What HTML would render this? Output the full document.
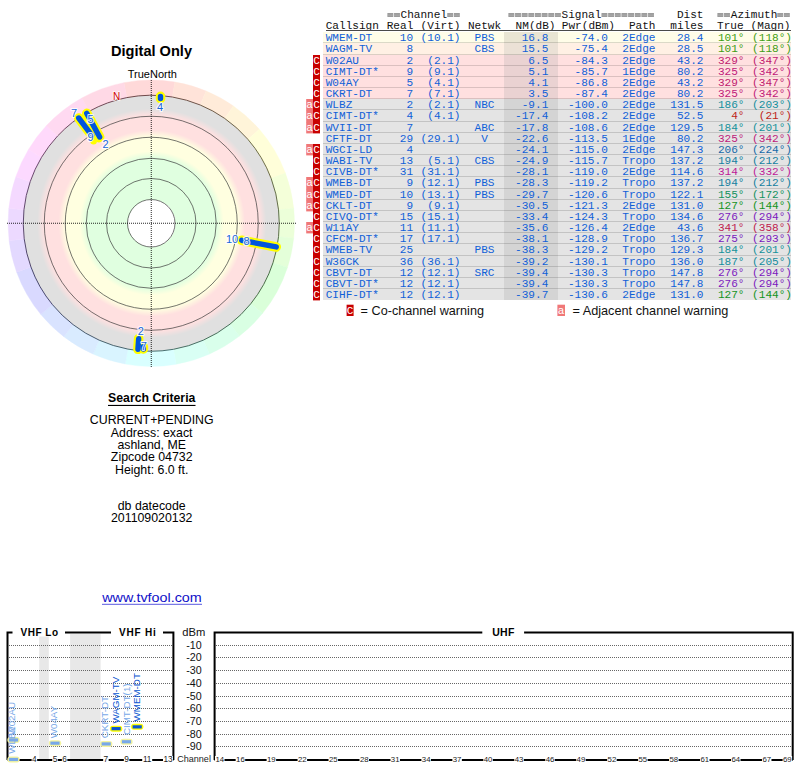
<!DOCTYPE html>
<html><head><meta charset="utf-8"><style>
html,body{margin:0;padding:0;background:#fff;width:800px;height:768px;overflow:hidden}
svg{display:block;position:absolute;left:0;top:0}
</style></head><body>
<svg width="800" height="768" viewBox="0 0 800 768">
<path d="M151.25,223.25 L123.93,82.68 A143.2,143.2 0 0 1 174.88,82.01 Z" fill="hsl(359,100%,92.5%)" stroke="hsl(359,100%,92.5%)" stroke-width="0.4"/>
<path d="M151.25,223.25 L174.88,82.01 A143.2,143.2 0 0 1 206.05,90.95 Z" fill="hsl(16,100%,92.5%)" stroke="hsl(16,100%,92.5%)" stroke-width="0.4"/>
<path d="M151.25,223.25 L206.05,90.95 A143.2,143.2 0 0 1 233.39,105.95 Z" fill="hsl(29,100%,92.5%)" stroke="hsl(29,100%,92.5%)" stroke-width="0.4"/>
<path d="M151.25,223.25 L233.39,105.95 A143.2,143.2 0 0 1 259.32,129.30 Z" fill="hsl(42,100%,92.5%)" stroke="hsl(42,100%,92.5%)" stroke-width="0.4"/>
<path d="M151.25,223.25 L259.32,129.30 A143.2,143.2 0 0 1 285.38,173.10 Z" fill="hsl(59,100%,92.5%)" stroke="hsl(59,100%,92.5%)" stroke-width="0.4"/>
<path d="M151.25,223.25 L285.38,173.10 A143.2,143.2 0 0 1 293.67,208.28 Z" fill="hsl(77,100%,92.5%)" stroke="hsl(77,100%,92.5%)" stroke-width="0.4"/>
<path d="M151.25,223.25 L293.67,208.28 A143.2,143.2 0 0 1 293.67,238.22 Z" fill="hsl(90,100%,92.5%)" stroke="hsl(90,100%,92.5%)" stroke-width="0.4"/>
<path d="M151.25,223.25 L293.67,238.22 A143.2,143.2 0 0 1 287.44,267.50 Z" fill="hsl(102,100%,92.5%)" stroke="hsl(102,100%,92.5%)" stroke-width="0.4"/>
<path d="M151.25,223.25 L287.44,267.50 A143.2,143.2 0 0 1 262.54,313.37 Z" fill="hsl(118,100%,92.5%)" stroke="hsl(118,100%,92.5%)" stroke-width="0.4"/>
<path d="M151.25,223.25 L262.54,313.37 A143.2,143.2 0 0 1 239.41,336.09 Z" fill="hsl(136,100%,92.5%)" stroke="hsl(136,100%,92.5%)" stroke-width="0.4"/>
<path d="M151.25,223.25 L239.41,336.09 A143.2,143.2 0 0 1 209.49,354.07 Z" fill="hsl(149,100%,92.5%)" stroke="hsl(149,100%,92.5%)" stroke-width="0.4"/>
<path d="M151.25,223.25 L209.49,354.07 A143.2,143.2 0 0 1 176.12,364.27 Z" fill="hsl(163,100%,92.5%)" stroke="hsl(163,100%,92.5%)" stroke-width="0.4"/>
<path d="M151.25,223.25 L176.12,364.27 A143.2,143.2 0 0 1 125.15,364.05 Z" fill="hsl(180,100%,92.5%)" stroke="hsl(180,100%,92.5%)" stroke-width="0.4"/>
<path d="M151.25,223.25 L125.15,364.05 A143.2,143.2 0 0 1 93.01,354.07 Z" fill="hsl(197,100%,92.5%)" stroke="hsl(197,100%,92.5%)" stroke-width="0.4"/>
<path d="M151.25,223.25 L93.01,354.07 A143.2,143.2 0 0 1 63.88,336.71 Z" fill="hsl(211,100%,92.5%)" stroke="hsl(211,100%,92.5%)" stroke-width="0.4"/>
<path d="M151.25,223.25 L63.88,336.71 A143.2,143.2 0 0 1 40.75,314.34 Z" fill="hsl(224,100%,92.5%)" stroke="hsl(224,100%,92.5%)" stroke-width="0.4"/>
<path d="M151.25,223.25 L40.75,314.34 A143.2,143.2 0 0 1 16.69,272.23 Z" fill="hsl(240,100%,92.5%)" stroke="hsl(240,100%,92.5%)" stroke-width="0.4"/>
<path d="M151.25,223.25 L16.69,272.23 A143.2,143.2 0 0 1 9.12,240.70 Z" fill="hsl(256,100%,92.5%)" stroke="hsl(256,100%,92.5%)" stroke-width="0.4"/>
<path d="M151.25,223.25 L9.12,240.70 A143.2,143.2 0 0 1 8.83,208.28 Z" fill="hsl(270,100%,92.5%)" stroke="hsl(270,100%,92.5%)" stroke-width="0.4"/>
<path d="M151.25,223.25 L8.83,208.28 A143.2,143.2 0 0 1 15.85,176.63 Z" fill="hsl(282,100%,92.5%)" stroke="hsl(282,100%,92.5%)" stroke-width="0.4"/>
<path d="M151.25,223.25 L15.85,176.63 A143.2,143.2 0 0 1 28.50,149.50 Z" fill="hsl(295,100%,92.5%)" stroke="hsl(295,100%,92.5%)" stroke-width="0.4"/>
<path d="M151.25,223.25 L28.50,149.50 A143.2,143.2 0 0 1 46.52,125.59 Z" fill="hsl(307,100%,92.5%)" stroke="hsl(307,100%,92.5%)" stroke-width="0.4"/>
<path d="M151.25,223.25 L46.52,125.59 A143.2,143.2 0 0 1 81.83,98.00 Z" fill="hsl(322,100%,92.5%)" stroke="hsl(322,100%,92.5%)" stroke-width="0.4"/>
<path d="M151.25,223.25 L81.83,98.00 A143.2,143.2 0 0 1 123.93,82.68 Z" fill="hsl(340,100%,92.5%)" stroke="hsl(340,100%,92.5%)" stroke-width="0.4"/>
<defs><radialGradient id="zg" gradientUnits="userSpaceOnUse" cx="151.75" cy="223.25" r="130">
<stop offset="0.0000" stop-color="#ffffff"/>
<stop offset="0.1827" stop-color="#ffffff"/>
<stop offset="0.1828" stop-color="#e0ffe0"/>
<stop offset="0.5000" stop-color="#e0ffe0"/>
<stop offset="0.5538" stop-color="#ffffe0"/>
<stop offset="0.6631" stop-color="#ffffe0"/>
<stop offset="0.7169" stop-color="#ffe0e0"/>
<stop offset="0.8269" stop-color="#ffe0e0"/>
<stop offset="0.8808" stop-color="#e0e0e0"/>
<stop offset="1.0000" stop-color="#e0e0e0"/>
</radialGradient></defs>
<circle cx="151.25" cy="223.25" r="128" fill="url(#zg)"/>
<circle cx="151.25" cy="223.25" r="23.75" fill="none" stroke="#3a3a3a" stroke-opacity="0.7" stroke-width="1"/>
<circle cx="151.25" cy="223.25" r="44.75" fill="none" stroke="#3a3a3a" stroke-opacity="0.7" stroke-width="1"/>
<circle cx="151.25" cy="223.25" r="65" fill="none" stroke="#3a3a3a" stroke-opacity="0.7" stroke-width="1"/>
<circle cx="151.25" cy="223.25" r="86" fill="none" stroke="#3a3a3a" stroke-opacity="0.7" stroke-width="1"/>
<circle cx="151.25" cy="223.25" r="107" fill="none" stroke="#3a3a3a" stroke-opacity="0.7" stroke-width="1"/>
<path d="M126.83,97.60 A128,128 0 0 1 172.38,97.01" fill="none" stroke="hsl(359,25%,30%)" stroke-opacity="0.9" stroke-width="1"/>
<path d="M172.38,97.01 A128,128 0 0 1 200.23,104.99" fill="none" stroke="hsl(16,25%,30%)" stroke-opacity="0.9" stroke-width="1"/>
<path d="M200.23,104.99 A128,128 0 0 1 224.67,118.40" fill="none" stroke="hsl(29,25%,30%)" stroke-opacity="0.9" stroke-width="1"/>
<path d="M224.67,118.40 A128,128 0 0 1 247.85,139.27" fill="none" stroke="hsl(42,25%,30%)" stroke-opacity="0.9" stroke-width="1"/>
<path d="M247.85,139.27 A128,128 0 0 1 271.14,178.42" fill="none" stroke="hsl(59,25%,30%)" stroke-opacity="0.9" stroke-width="1"/>
<path d="M271.14,178.42 A128,128 0 0 1 278.55,209.87" fill="none" stroke="hsl(77,25%,30%)" stroke-opacity="0.9" stroke-width="1"/>
<path d="M278.55,209.87 A128,128 0 0 1 278.55,236.63" fill="none" stroke="hsl(90,25%,30%)" stroke-opacity="0.9" stroke-width="1"/>
<path d="M278.55,236.63 A128,128 0 0 1 272.99,262.80" fill="none" stroke="hsl(102,25%,30%)" stroke-opacity="0.9" stroke-width="1"/>
<path d="M272.99,262.80 A128,128 0 0 1 250.72,303.80" fill="none" stroke="hsl(118,25%,30%)" stroke-opacity="0.9" stroke-width="1"/>
<path d="M250.72,303.80 A128,128 0 0 1 230.05,324.12" fill="none" stroke="hsl(136,25%,30%)" stroke-opacity="0.9" stroke-width="1"/>
<path d="M230.05,324.12 A128,128 0 0 1 203.31,340.18" fill="none" stroke="hsl(149,25%,30%)" stroke-opacity="0.9" stroke-width="1"/>
<path d="M203.31,340.18 A128,128 0 0 1 173.48,349.31" fill="none" stroke="hsl(163,25%,30%)" stroke-opacity="0.9" stroke-width="1"/>
<path d="M173.48,349.31 A128,128 0 0 1 127.92,349.11" fill="none" stroke="hsl(180,25%,30%)" stroke-opacity="0.9" stroke-width="1"/>
<path d="M127.92,349.11 A128,128 0 0 1 99.19,340.18" fill="none" stroke="hsl(197,25%,30%)" stroke-opacity="0.9" stroke-width="1"/>
<path d="M99.19,340.18 A128,128 0 0 1 73.15,324.66" fill="none" stroke="hsl(211,25%,30%)" stroke-opacity="0.9" stroke-width="1"/>
<path d="M73.15,324.66 A128,128 0 0 1 52.48,304.67" fill="none" stroke="hsl(224,25%,30%)" stroke-opacity="0.9" stroke-width="1"/>
<path d="M52.48,304.67 A128,128 0 0 1 30.97,267.03" fill="none" stroke="hsl(240,25%,30%)" stroke-opacity="0.9" stroke-width="1"/>
<path d="M30.97,267.03 A128,128 0 0 1 24.20,238.85" fill="none" stroke="hsl(256,25%,30%)" stroke-opacity="0.9" stroke-width="1"/>
<path d="M24.20,238.85 A128,128 0 0 1 23.95,209.87" fill="none" stroke="hsl(270,25%,30%)" stroke-opacity="0.9" stroke-width="1"/>
<path d="M23.95,209.87 A128,128 0 0 1 30.22,181.58" fill="none" stroke="hsl(282,25%,30%)" stroke-opacity="0.9" stroke-width="1"/>
<path d="M30.22,181.58 A128,128 0 0 1 41.53,157.33" fill="none" stroke="hsl(295,25%,30%)" stroke-opacity="0.9" stroke-width="1"/>
<path d="M41.53,157.33 A128,128 0 0 1 57.64,135.95" fill="none" stroke="hsl(307,25%,30%)" stroke-opacity="0.9" stroke-width="1"/>
<path d="M57.64,135.95 A128,128 0 0 1 89.19,111.30" fill="none" stroke="hsl(322,25%,30%)" stroke-opacity="0.9" stroke-width="1"/>
<path d="M89.19,111.30 A128,128 0 0 1 126.83,97.60" fill="none" stroke="hsl(340,25%,30%)" stroke-opacity="0.9" stroke-width="1"/>
<line x1="7" y1="223.25" x2="296" y2="223.25" stroke="#000" stroke-opacity="0.85" stroke-width="1" stroke-dasharray="1,1"/>
<line x1="151.25" y1="80" x2="151.25" y2="367" stroke="#000" stroke-opacity="0.85" stroke-width="1" stroke-dasharray="1,1"/>
<text x="151.5" y="56" font-family="Liberation Sans" font-weight="bold" font-size="14.6" text-anchor="middle" fill="#000">Digital Only</text>
<text x="152.3" y="78.2" font-family="Liberation Sans" font-size="11" text-anchor="middle" fill="#000">TrueNorth</text>
<text x="116.5" y="99.5" font-family="Liberation Sans" font-size="10" text-anchor="middle" fill="#d00000" stroke="#fff" stroke-width="1.6" stroke-opacity="0.8" paint-order="stroke">N</text>
<circle cx="93.6" cy="141.3" r="3.3" fill="#ffff00"/>
<circle cx="98.8" cy="139.6" r="3.0" fill="#ffff00"/>
<line x1="78.70" y1="118.00" x2="91.60" y2="135.10" stroke="#ffff00" stroke-width="9.6" stroke-linecap="round"/>
<line x1="86.76" y1="113.36" x2="99.64" y2="137.04" stroke="#ffff00" stroke-width="9.6" stroke-linecap="round"/>
<line x1="241.66" y1="240.28" x2="276.24" y2="246.92" stroke="#ffff00" stroke-width="9.6" stroke-linecap="round"/>
<line x1="160.50" y1="96.40" x2="160.50" y2="98.60" stroke="#ffff00" stroke-width="9.6" stroke-linecap="round"/>
<line x1="138.66" y1="338.60" x2="137.94" y2="349.30" stroke="#ffff00" stroke-width="9.6" stroke-linecap="round"/>
<line x1="143.30" y1="346.80" x2="143.40" y2="349.00" stroke="#ffff00" stroke-width="9.6" stroke-linecap="round"/>
<line x1="78.70" y1="118.00" x2="91.60" y2="135.10" stroke="#0055dd" stroke-width="5.4" stroke-linecap="round"/>
<line x1="86.76" y1="113.36" x2="99.64" y2="137.04" stroke="#0055dd" stroke-width="5.4" stroke-linecap="round"/>
<line x1="241.66" y1="240.28" x2="276.24" y2="246.92" stroke="#0055dd" stroke-width="5.4" stroke-linecap="round"/>
<line x1="160.50" y1="96.40" x2="160.50" y2="98.60" stroke="#0055dd" stroke-width="5.4" stroke-linecap="round"/>
<line x1="138.66" y1="338.60" x2="137.94" y2="349.30" stroke="#0055dd" stroke-width="5.4" stroke-linecap="round"/>
<line x1="143.30" y1="346.80" x2="143.40" y2="349.00" stroke="#0055dd" stroke-width="5.4" stroke-linecap="round"/>
<text x="74" y="116.5" font-family="Liberation Sans" font-size="11" text-anchor="middle" fill="#1a66d9" stroke="#fff" stroke-width="2.2" stroke-opacity="0.85" stroke-linejoin="round" paint-order="stroke">7</text>
<text x="90.5" y="123" font-family="Liberation Sans" font-size="11" text-anchor="middle" fill="#1a66d9" stroke="#fff" stroke-width="2.2" stroke-opacity="0.85" stroke-linejoin="round" paint-order="stroke">5</text>
<text x="90.6" y="140.8" font-family="Liberation Sans" font-size="11" text-anchor="middle" fill="#1a66d9" stroke="#fff" stroke-width="2.2" stroke-opacity="0.85" stroke-linejoin="round" paint-order="stroke">9</text>
<text x="105.5" y="148.2" font-family="Liberation Sans" font-size="11" text-anchor="middle" fill="#1a66d9" stroke="#fff" stroke-width="2.2" stroke-opacity="0.85" stroke-linejoin="round" paint-order="stroke">2</text>
<text x="160" y="111" font-family="Liberation Sans" font-size="11" text-anchor="middle" fill="#1a66d9" stroke="#fff" stroke-width="2.2" stroke-opacity="0.85" stroke-linejoin="round" paint-order="stroke">4</text>
<text x="232" y="243" font-family="Liberation Sans" font-size="11" text-anchor="middle" fill="#1a66d9" stroke="#fff" stroke-width="2.2" stroke-opacity="0.85" stroke-linejoin="round" paint-order="stroke">10</text>
<text x="246.5" y="245" font-family="Liberation Sans" font-size="11" text-anchor="middle" fill="#1a66d9" stroke="#fff" stroke-width="2.2" stroke-opacity="0.85" stroke-linejoin="round" paint-order="stroke">8</text>
<text x="140.9" y="335" font-family="Liberation Sans" font-size="11" text-anchor="middle" fill="#1a66d9" stroke="#fff" stroke-width="2.2" stroke-opacity="0.85" stroke-linejoin="round" paint-order="stroke">2</text>
<text x="143.75" y="350" font-family="Liberation Sans" font-size="11" text-anchor="middle" fill="#1a66d9" stroke="#fff" stroke-width="2.2" stroke-opacity="0.85" stroke-linejoin="round" paint-order="stroke">7</text>
<text x="151.75" y="402" font-family="Liberation Sans" font-weight="bold" font-size="12" text-anchor="middle" fill="#000" textLength="87.3" lengthAdjust="spacingAndGlyphs">Search Criteria</text>
<rect x="108" y="404.9" width="87.5" height="1.1" fill="#000"/>
<text x="151.7" y="423.75" font-family="Liberation Sans" font-size="12.35" text-anchor="middle" fill="#000">CURRENT+PENDING</text>
<text x="151.7" y="436.9" font-family="Liberation Sans" font-size="12.35" text-anchor="middle" fill="#000">Address: exact</text>
<text x="151.7" y="449.2" font-family="Liberation Sans" font-size="12.35" text-anchor="middle" fill="#000">ashland, ME</text>
<text x="151.7" y="461.25" font-family="Liberation Sans" font-size="12.35" text-anchor="middle" fill="#000">Zipcode 04732</text>
<text x="151.7" y="473.75" font-family="Liberation Sans" font-size="12.35" text-anchor="middle" fill="#000">Height: 6.0 ft.</text>
<text x="151.7" y="509.6" font-family="Liberation Sans" font-size="12.35" text-anchor="middle" fill="#000">db datecode</text>
<text x="151.7" y="522.3" font-family="Liberation Sans" font-size="12.35" text-anchor="middle" fill="#000">201109020132</text>
<text x="152" y="602" font-family="Liberation Sans" font-size="13" text-anchor="middle" fill="#1010c8" textLength="99.5" lengthAdjust="spacingAndGlyphs">www.tvfool.com</text>
<rect x="102" y="603.8" width="100" height="1" fill="#5a5ae0"/>
<g font-family="Liberation Mono" font-size="11.08" fill="#111" stroke="#111" stroke-width="0.0" transform="scale(1,1.0)">
<text x="400.5" y="18.100" >Channel</text>
<text x="561.5" y="18.100">Signal</text>
<text x="703.5" y="18.100" text-anchor="end">Dist</text>
<text x="730.8" y="18.100">Azimuth</text>
<text x="325.7" y="28.600">Callsign</text>
<text x="413.3" y="28.600" text-anchor="end">Real</text>
<text x="460.5" y="28.600" text-anchor="end">(Virt)</text>
<text x="484.5" y="28.600" text-anchor="middle">Netwk</text>
<text x="555.5" y="28.600" text-anchor="end">NM(dB)</text>
<text x="615" y="28.600" text-anchor="end">Pwr(dBm)</text>
<text x="655.5" y="28.600" text-anchor="end">Path</text>
<text x="703.5" y="28.600" text-anchor="end">miles</text>
<text x="717" y="28.600">True</text>
<text x="790.5" y="28.600" text-anchor="end">(Magn)</text>
</g>
<rect x="326" y="30" width="465" height="1" fill="#4a4a4a"/>
<rect x="387.40" y="13" width="5.9" height="4" fill="#9c9c9c"/>
<rect x="387.40" y="14.8" width="5.9" height="0.5" fill="#b8b8b8"/>
<rect x="394.05" y="13" width="5.9" height="4" fill="#9c9c9c"/>
<rect x="394.05" y="14.8" width="5.9" height="0.5" fill="#b8b8b8"/>
<rect x="447.25" y="13" width="5.9" height="4" fill="#9c9c9c"/>
<rect x="447.25" y="14.8" width="5.9" height="0.5" fill="#b8b8b8"/>
<rect x="453.90" y="13" width="5.9" height="4" fill="#9c9c9c"/>
<rect x="453.90" y="14.8" width="5.9" height="0.5" fill="#b8b8b8"/>
<rect x="508.40" y="13" width="5.9" height="4" fill="#9c9c9c"/>
<rect x="508.40" y="14.8" width="5.9" height="0.5" fill="#b8b8b8"/>
<rect x="515.05" y="13" width="5.9" height="4" fill="#9c9c9c"/>
<rect x="515.05" y="14.8" width="5.9" height="0.5" fill="#b8b8b8"/>
<rect x="521.70" y="13" width="5.9" height="4" fill="#9c9c9c"/>
<rect x="521.70" y="14.8" width="5.9" height="0.5" fill="#b8b8b8"/>
<rect x="528.35" y="13" width="5.9" height="4" fill="#9c9c9c"/>
<rect x="528.35" y="14.8" width="5.9" height="0.5" fill="#b8b8b8"/>
<rect x="535.00" y="13" width="5.9" height="4" fill="#9c9c9c"/>
<rect x="535.00" y="14.8" width="5.9" height="0.5" fill="#b8b8b8"/>
<rect x="541.65" y="13" width="5.9" height="4" fill="#9c9c9c"/>
<rect x="541.65" y="14.8" width="5.9" height="0.5" fill="#b8b8b8"/>
<rect x="548.30" y="13" width="5.9" height="4" fill="#9c9c9c"/>
<rect x="548.30" y="14.8" width="5.9" height="0.5" fill="#b8b8b8"/>
<rect x="554.95" y="13" width="5.9" height="4" fill="#9c9c9c"/>
<rect x="554.95" y="14.8" width="5.9" height="0.5" fill="#b8b8b8"/>
<rect x="601.50" y="13" width="5.9" height="4" fill="#9c9c9c"/>
<rect x="601.50" y="14.8" width="5.9" height="0.5" fill="#b8b8b8"/>
<rect x="608.15" y="13" width="5.9" height="4" fill="#9c9c9c"/>
<rect x="608.15" y="14.8" width="5.9" height="0.5" fill="#b8b8b8"/>
<rect x="614.80" y="13" width="5.9" height="4" fill="#9c9c9c"/>
<rect x="614.80" y="14.8" width="5.9" height="0.5" fill="#b8b8b8"/>
<rect x="621.45" y="13" width="5.9" height="4" fill="#9c9c9c"/>
<rect x="621.45" y="14.8" width="5.9" height="0.5" fill="#b8b8b8"/>
<rect x="628.10" y="13" width="5.9" height="4" fill="#9c9c9c"/>
<rect x="628.10" y="14.8" width="5.9" height="0.5" fill="#b8b8b8"/>
<rect x="634.75" y="13" width="5.9" height="4" fill="#9c9c9c"/>
<rect x="634.75" y="14.8" width="5.9" height="0.5" fill="#b8b8b8"/>
<rect x="641.40" y="13" width="5.9" height="4" fill="#9c9c9c"/>
<rect x="641.40" y="14.8" width="5.9" height="0.5" fill="#b8b8b8"/>
<rect x="648.05" y="13" width="5.9" height="4" fill="#9c9c9c"/>
<rect x="648.05" y="14.8" width="5.9" height="0.5" fill="#b8b8b8"/>
<rect x="717.40" y="13" width="5.9" height="4" fill="#9c9c9c"/>
<rect x="717.40" y="14.8" width="5.9" height="0.5" fill="#b8b8b8"/>
<rect x="724.05" y="13" width="5.9" height="4" fill="#9c9c9c"/>
<rect x="724.05" y="14.8" width="5.9" height="0.5" fill="#b8b8b8"/>
<rect x="777.25" y="13" width="5.9" height="4" fill="#9c9c9c"/>
<rect x="777.25" y="14.8" width="5.9" height="0.5" fill="#b8b8b8"/>
<rect x="783.90" y="13" width="5.9" height="4" fill="#9c9c9c"/>
<rect x="783.90" y="14.8" width="5.9" height="0.5" fill="#b8b8b8"/>
<rect x="323" y="32" width="468" height="11" fill="#fffde8" shape-rendering="crispEdges"/>
<rect x="504" y="32" width="54" height="11" fill="#e9e5d3" shape-rendering="crispEdges"/>
<rect x="323" y="42" width="468" height="1" fill="#000" fill-opacity="0.14" shape-rendering="crispEdges"/>
<rect x="323" y="43" width="468" height="12" fill="#fff0e4" shape-rendering="crispEdges"/>
<rect x="504" y="43" width="54" height="12" fill="#ebe1d6" shape-rendering="crispEdges"/>
<rect x="323" y="54" width="468" height="1" fill="#000" fill-opacity="0.14" shape-rendering="crispEdges"/>
<rect x="323" y="55" width="468" height="11" fill="#ffe0e0" shape-rendering="crispEdges"/>
<rect x="504" y="55" width="54" height="11" fill="#ead2d2" shape-rendering="crispEdges"/>
<rect x="323" y="65" width="468" height="1" fill="#000" fill-opacity="0.14" shape-rendering="crispEdges"/>
<rect x="313" y="55" width="7" height="11.40" fill="#c80000"/>
<text x="316.5" y="64.20" font-family="Liberation Mono" font-size="11.08" fill="#fff" text-anchor="middle">C</text>
<rect x="323" y="66" width="468" height="11" fill="#ffe0e0" shape-rendering="crispEdges"/>
<rect x="504" y="66" width="54" height="11" fill="#ead2d2" shape-rendering="crispEdges"/>
<rect x="323" y="76" width="468" height="1" fill="#000" fill-opacity="0.14" shape-rendering="crispEdges"/>
<rect x="313" y="66" width="7" height="11.40" fill="#c80000"/>
<text x="316.5" y="75.20" font-family="Liberation Mono" font-size="11.08" fill="#fff" text-anchor="middle">C</text>
<rect x="323" y="77" width="468" height="11" fill="#ffe0e0" shape-rendering="crispEdges"/>
<rect x="504" y="77" width="54" height="11" fill="#ead2d2" shape-rendering="crispEdges"/>
<rect x="323" y="87" width="468" height="1" fill="#000" fill-opacity="0.14" shape-rendering="crispEdges"/>
<rect x="313" y="77" width="7" height="11.40" fill="#c80000"/>
<text x="316.5" y="86.20" font-family="Liberation Mono" font-size="11.08" fill="#fff" text-anchor="middle">C</text>
<rect x="323" y="88" width="468" height="11" fill="#ffe0e0" shape-rendering="crispEdges"/>
<rect x="504" y="88" width="54" height="11" fill="#ead2d2" shape-rendering="crispEdges"/>
<rect x="323" y="98" width="468" height="1" fill="#000" fill-opacity="0.14" shape-rendering="crispEdges"/>
<rect x="313" y="88" width="7" height="11.40" fill="#c80000"/>
<text x="316.5" y="97.20" font-family="Liberation Mono" font-size="11.08" fill="#fff" text-anchor="middle">C</text>
<rect x="323" y="99" width="468" height="11" fill="#e4e4e4" shape-rendering="crispEdges"/>
<rect x="504" y="99" width="54" height="11" fill="#d4d4d4" shape-rendering="crispEdges"/>
<rect x="323" y="109" width="468" height="1" fill="#000" fill-opacity="0.14" shape-rendering="crispEdges"/>
<rect x="313" y="99" width="7" height="11.40" fill="#c80000"/>
<text x="316.5" y="108.20" font-family="Liberation Mono" font-size="11.08" fill="#fff" text-anchor="middle">C</text>
<rect x="306.2" y="99" width="6.8" height="11.40" fill="#f07878"/>
<text x="309.6" y="108.20" font-family="Liberation Mono" font-size="11.08" fill="#fff" text-anchor="middle">a</text>
<rect x="323" y="110" width="468" height="12" fill="#e4e4e4" shape-rendering="crispEdges"/>
<rect x="504" y="110" width="54" height="12" fill="#d4d4d4" shape-rendering="crispEdges"/>
<rect x="323" y="121" width="468" height="1" fill="#000" fill-opacity="0.14" shape-rendering="crispEdges"/>
<rect x="313" y="110" width="7" height="12.40" fill="#c80000"/>
<text x="316.5" y="119.20" font-family="Liberation Mono" font-size="11.08" fill="#fff" text-anchor="middle">C</text>
<rect x="306.2" y="110" width="6.8" height="12.40" fill="#f07878"/>
<text x="309.6" y="119.20" font-family="Liberation Mono" font-size="11.08" fill="#fff" text-anchor="middle">a</text>
<rect x="323" y="122" width="468" height="11" fill="#e4e4e4" shape-rendering="crispEdges"/>
<rect x="504" y="122" width="54" height="11" fill="#d4d4d4" shape-rendering="crispEdges"/>
<rect x="323" y="132" width="468" height="1" fill="#000" fill-opacity="0.14" shape-rendering="crispEdges"/>
<rect x="313" y="122" width="7" height="11.40" fill="#c80000"/>
<text x="316.5" y="131.20" font-family="Liberation Mono" font-size="11.08" fill="#fff" text-anchor="middle">C</text>
<rect x="306.2" y="122" width="6.8" height="11.40" fill="#f07878"/>
<text x="309.6" y="131.20" font-family="Liberation Mono" font-size="11.08" fill="#fff" text-anchor="middle">a</text>
<rect x="323" y="133" width="468" height="11" fill="#e4e4e4" shape-rendering="crispEdges"/>
<rect x="504" y="133" width="54" height="11" fill="#d4d4d4" shape-rendering="crispEdges"/>
<rect x="323" y="143" width="468" height="1" fill="#000" fill-opacity="0.14" shape-rendering="crispEdges"/>
<rect x="323" y="144" width="468" height="11" fill="#e4e4e4" shape-rendering="crispEdges"/>
<rect x="504" y="144" width="54" height="11" fill="#d4d4d4" shape-rendering="crispEdges"/>
<rect x="323" y="154" width="468" height="1" fill="#000" fill-opacity="0.14" shape-rendering="crispEdges"/>
<rect x="313" y="144" width="7" height="11.40" fill="#c80000"/>
<text x="316.5" y="153.20" font-family="Liberation Mono" font-size="11.08" fill="#fff" text-anchor="middle">C</text>
<rect x="306.2" y="144" width="6.8" height="11.40" fill="#f07878"/>
<text x="309.6" y="153.20" font-family="Liberation Mono" font-size="11.08" fill="#fff" text-anchor="middle">a</text>
<rect x="323" y="155" width="468" height="11" fill="#e4e4e4" shape-rendering="crispEdges"/>
<rect x="504" y="155" width="54" height="11" fill="#d4d4d4" shape-rendering="crispEdges"/>
<rect x="323" y="165" width="468" height="1" fill="#000" fill-opacity="0.14" shape-rendering="crispEdges"/>
<rect x="313" y="155" width="7" height="11.40" fill="#c80000"/>
<text x="316.5" y="164.20" font-family="Liberation Mono" font-size="11.08" fill="#fff" text-anchor="middle">C</text>
<rect x="323" y="166" width="468" height="11" fill="#e4e4e4" shape-rendering="crispEdges"/>
<rect x="504" y="166" width="54" height="11" fill="#d4d4d4" shape-rendering="crispEdges"/>
<rect x="323" y="176" width="468" height="1" fill="#000" fill-opacity="0.14" shape-rendering="crispEdges"/>
<rect x="313" y="166" width="7" height="11.40" fill="#c80000"/>
<text x="316.5" y="175.20" font-family="Liberation Mono" font-size="11.08" fill="#fff" text-anchor="middle">C</text>
<rect x="323" y="177" width="468" height="12" fill="#e4e4e4" shape-rendering="crispEdges"/>
<rect x="504" y="177" width="54" height="12" fill="#d4d4d4" shape-rendering="crispEdges"/>
<rect x="323" y="188" width="468" height="1" fill="#000" fill-opacity="0.14" shape-rendering="crispEdges"/>
<rect x="313" y="177" width="7" height="12.40" fill="#c80000"/>
<text x="316.5" y="186.20" font-family="Liberation Mono" font-size="11.08" fill="#fff" text-anchor="middle">C</text>
<rect x="306.2" y="177" width="6.8" height="12.40" fill="#f07878"/>
<text x="309.6" y="186.20" font-family="Liberation Mono" font-size="11.08" fill="#fff" text-anchor="middle">a</text>
<rect x="323" y="189" width="468" height="11" fill="#e4e4e4" shape-rendering="crispEdges"/>
<rect x="504" y="189" width="54" height="11" fill="#d4d4d4" shape-rendering="crispEdges"/>
<rect x="323" y="199" width="468" height="1" fill="#000" fill-opacity="0.14" shape-rendering="crispEdges"/>
<rect x="313" y="189" width="7" height="11.40" fill="#c80000"/>
<text x="316.5" y="198.20" font-family="Liberation Mono" font-size="11.08" fill="#fff" text-anchor="middle">C</text>
<rect x="306.2" y="189" width="6.8" height="11.40" fill="#f07878"/>
<text x="309.6" y="198.20" font-family="Liberation Mono" font-size="11.08" fill="#fff" text-anchor="middle">a</text>
<rect x="323" y="200" width="468" height="11" fill="#e4e4e4" shape-rendering="crispEdges"/>
<rect x="504" y="200" width="54" height="11" fill="#d4d4d4" shape-rendering="crispEdges"/>
<rect x="323" y="210" width="468" height="1" fill="#000" fill-opacity="0.14" shape-rendering="crispEdges"/>
<rect x="313" y="200" width="7" height="11.40" fill="#c80000"/>
<text x="316.5" y="209.20" font-family="Liberation Mono" font-size="11.08" fill="#fff" text-anchor="middle">C</text>
<rect x="306.2" y="200" width="6.8" height="11.40" fill="#f07878"/>
<text x="309.6" y="209.20" font-family="Liberation Mono" font-size="11.08" fill="#fff" text-anchor="middle">a</text>
<rect x="323" y="211" width="468" height="11" fill="#e4e4e4" shape-rendering="crispEdges"/>
<rect x="504" y="211" width="54" height="11" fill="#d4d4d4" shape-rendering="crispEdges"/>
<rect x="323" y="221" width="468" height="1" fill="#000" fill-opacity="0.14" shape-rendering="crispEdges"/>
<rect x="313" y="211" width="7" height="11.40" fill="#c80000"/>
<text x="316.5" y="220.20" font-family="Liberation Mono" font-size="11.08" fill="#fff" text-anchor="middle">C</text>
<rect x="323" y="222" width="468" height="11" fill="#e4e4e4" shape-rendering="crispEdges"/>
<rect x="504" y="222" width="54" height="11" fill="#d4d4d4" shape-rendering="crispEdges"/>
<rect x="323" y="232" width="468" height="1" fill="#000" fill-opacity="0.14" shape-rendering="crispEdges"/>
<rect x="313" y="222" width="7" height="11.40" fill="#c80000"/>
<text x="316.5" y="231.20" font-family="Liberation Mono" font-size="11.08" fill="#fff" text-anchor="middle">C</text>
<rect x="306.2" y="222" width="6.8" height="11.40" fill="#f07878"/>
<text x="309.6" y="231.20" font-family="Liberation Mono" font-size="11.08" fill="#fff" text-anchor="middle">a</text>
<rect x="323" y="233" width="468" height="11" fill="#e4e4e4" shape-rendering="crispEdges"/>
<rect x="504" y="233" width="54" height="11" fill="#d4d4d4" shape-rendering="crispEdges"/>
<rect x="323" y="243" width="468" height="1" fill="#000" fill-opacity="0.14" shape-rendering="crispEdges"/>
<rect x="313" y="233" width="7" height="11.40" fill="#c80000"/>
<text x="316.5" y="242.20" font-family="Liberation Mono" font-size="11.08" fill="#fff" text-anchor="middle">C</text>
<rect x="323" y="244" width="468" height="12" fill="#e4e4e4" shape-rendering="crispEdges"/>
<rect x="504" y="244" width="54" height="12" fill="#d4d4d4" shape-rendering="crispEdges"/>
<rect x="323" y="255" width="468" height="1" fill="#000" fill-opacity="0.14" shape-rendering="crispEdges"/>
<rect x="313" y="244" width="7" height="12.40" fill="#c80000"/>
<text x="316.5" y="253.20" font-family="Liberation Mono" font-size="11.08" fill="#fff" text-anchor="middle">C</text>
<rect x="323" y="256" width="468" height="11" fill="#e4e4e4" shape-rendering="crispEdges"/>
<rect x="504" y="256" width="54" height="11" fill="#d4d4d4" shape-rendering="crispEdges"/>
<rect x="323" y="266" width="468" height="1" fill="#000" fill-opacity="0.14" shape-rendering="crispEdges"/>
<rect x="313" y="256" width="7" height="11.40" fill="#c80000"/>
<text x="316.5" y="265.20" font-family="Liberation Mono" font-size="11.08" fill="#fff" text-anchor="middle">C</text>
<rect x="323" y="267" width="468" height="11" fill="#e4e4e4" shape-rendering="crispEdges"/>
<rect x="504" y="267" width="54" height="11" fill="#d4d4d4" shape-rendering="crispEdges"/>
<rect x="323" y="277" width="468" height="1" fill="#000" fill-opacity="0.14" shape-rendering="crispEdges"/>
<rect x="313" y="267" width="7" height="11.40" fill="#c80000"/>
<text x="316.5" y="276.20" font-family="Liberation Mono" font-size="11.08" fill="#fff" text-anchor="middle">C</text>
<rect x="323" y="278" width="468" height="11" fill="#e4e4e4" shape-rendering="crispEdges"/>
<rect x="504" y="278" width="54" height="11" fill="#d4d4d4" shape-rendering="crispEdges"/>
<rect x="323" y="288" width="468" height="1" fill="#000" fill-opacity="0.14" shape-rendering="crispEdges"/>
<rect x="313" y="278" width="7" height="11.40" fill="#c80000"/>
<text x="316.5" y="287.20" font-family="Liberation Mono" font-size="11.08" fill="#fff" text-anchor="middle">C</text>
<rect x="323" y="289" width="468" height="11" fill="#e4e4e4" shape-rendering="crispEdges"/>
<rect x="504" y="289" width="54" height="11" fill="#d4d4d4" shape-rendering="crispEdges"/>
<rect x="313" y="289" width="7" height="11.40" fill="#c80000"/>
<text x="316.5" y="298.20" font-family="Liberation Mono" font-size="11.08" fill="#fff" text-anchor="middle">C</text>
<g font-family="Liberation Mono" font-size="11.08" fill="#1060d8" stroke="#1060d8" stroke-width="0.0" transform="scale(1,1.0)">
<text x="325.7" y="40.90">WMEM-DT</text>
<text x="413.1" y="40.90" text-anchor="end">10</text>
<text x="460.5" y="40.90" text-anchor="end">(10.1)</text>
<text x="484.5" y="40.90" text-anchor="middle">PBS</text>
<text x="548.3" y="40.90" text-anchor="end">16.8</text>
<text x="607.8" y="40.90" text-anchor="end">-74.0</text>
<text x="655.5" y="40.90" text-anchor="end">2Edge</text>
<text x="703.5" y="40.90" text-anchor="end">28.4</text>
<text x="744.5" y="40.90" text-anchor="end" fill="hsl(101,77%,34.8%)" stroke="hsl(101,77%,34.8%)">101°</text>
<text x="792" y="40.90" text-anchor="end" fill="hsl(101,77%,34.8%)" stroke="hsl(101,77%,34.8%)">(118°)</text>
<text x="325.7" y="51.90">WAGM-TV</text>
<text x="413.1" y="51.90" text-anchor="end">8</text>
<text x="484.5" y="51.90" text-anchor="middle">CBS</text>
<text x="548.3" y="51.90" text-anchor="end">15.5</text>
<text x="607.8" y="51.90" text-anchor="end">-75.4</text>
<text x="655.5" y="51.90" text-anchor="end">2Edge</text>
<text x="703.5" y="51.90" text-anchor="end">28.5</text>
<text x="744.5" y="51.90" text-anchor="end" fill="hsl(101,77%,34.8%)" stroke="hsl(101,77%,34.8%)">101°</text>
<text x="792" y="51.90" text-anchor="end" fill="hsl(101,77%,34.8%)" stroke="hsl(101,77%,34.8%)">(118°)</text>
<text x="325.7" y="63.90">W02AU</text>
<text x="413.1" y="63.90" text-anchor="end">2</text>
<text x="460.5" y="63.90" text-anchor="end">(2.1)</text>
<text x="548.3" y="63.90" text-anchor="end">6.5</text>
<text x="607.8" y="63.90" text-anchor="end">-84.3</text>
<text x="655.5" y="63.90" text-anchor="end">2Edge</text>
<text x="703.5" y="63.90" text-anchor="end">43.2</text>
<text x="744.5" y="63.90" text-anchor="end" fill="hsl(329,77%,42.0%)" stroke="hsl(329,77%,42.0%)">329°</text>
<text x="792" y="63.90" text-anchor="end" fill="hsl(329,77%,42.0%)" stroke="hsl(329,77%,42.0%)">(347°)</text>
<text x="325.7" y="74.90">CIMT-DT*</text>
<text x="413.1" y="74.90" text-anchor="end">9</text>
<text x="460.5" y="74.90" text-anchor="end">(9.1)</text>
<text x="548.3" y="74.90" text-anchor="end">5.1</text>
<text x="607.8" y="74.90" text-anchor="end">-85.7</text>
<text x="655.5" y="74.90" text-anchor="end">1Edge</text>
<text x="703.5" y="74.90" text-anchor="end">80.2</text>
<text x="744.5" y="74.90" text-anchor="end" fill="hsl(325,77%,42.0%)" stroke="hsl(325,77%,42.0%)">325°</text>
<text x="792" y="74.90" text-anchor="end" fill="hsl(325,77%,42.0%)" stroke="hsl(325,77%,42.0%)">(342°)</text>
<text x="325.7" y="85.90">W04AY</text>
<text x="413.1" y="85.90" text-anchor="end">5</text>
<text x="460.5" y="85.90" text-anchor="end">(4.1)</text>
<text x="548.3" y="85.90" text-anchor="end">4.1</text>
<text x="607.8" y="85.90" text-anchor="end">-86.8</text>
<text x="655.5" y="85.90" text-anchor="end">2Edge</text>
<text x="703.5" y="85.90" text-anchor="end">43.2</text>
<text x="744.5" y="85.90" text-anchor="end" fill="hsl(329,77%,42.0%)" stroke="hsl(329,77%,42.0%)">329°</text>
<text x="792" y="85.90" text-anchor="end" fill="hsl(329,77%,42.0%)" stroke="hsl(329,77%,42.0%)">(347°)</text>
<text x="325.7" y="96.90">CKRT-DT</text>
<text x="413.1" y="96.90" text-anchor="end">7</text>
<text x="460.5" y="96.90" text-anchor="end">(7.1)</text>
<text x="548.3" y="96.90" text-anchor="end">3.5</text>
<text x="607.8" y="96.90" text-anchor="end">-87.4</text>
<text x="655.5" y="96.90" text-anchor="end">2Edge</text>
<text x="703.5" y="96.90" text-anchor="end">80.2</text>
<text x="744.5" y="96.90" text-anchor="end" fill="hsl(325,77%,42.0%)" stroke="hsl(325,77%,42.0%)">325°</text>
<text x="792" y="96.90" text-anchor="end" fill="hsl(325,77%,42.0%)" stroke="hsl(325,77%,42.0%)">(342°)</text>
<text x="325.7" y="107.90">WLBZ</text>
<text x="413.1" y="107.90" text-anchor="end">2</text>
<text x="460.5" y="107.90" text-anchor="end">(2.1)</text>
<text x="484.5" y="107.90" text-anchor="middle">NBC</text>
<text x="548.3" y="107.90" text-anchor="end">-9.1</text>
<text x="607.8" y="107.90" text-anchor="end">-100.0</text>
<text x="655.5" y="107.90" text-anchor="end">2Edge</text>
<text x="703.5" y="107.90" text-anchor="end">131.5</text>
<text x="744.5" y="107.90" text-anchor="end" fill="hsl(186,77%,34.5%)" stroke="hsl(186,77%,34.5%)">186°</text>
<text x="792" y="107.90" text-anchor="end" fill="hsl(186,77%,34.5%)" stroke="hsl(186,77%,34.5%)">(203°)</text>
<text x="325.7" y="118.90">CIMT-DT*</text>
<text x="413.1" y="118.90" text-anchor="end">4</text>
<text x="460.5" y="118.90" text-anchor="end">(4.1)</text>
<text x="548.3" y="118.90" text-anchor="end">-17.4</text>
<text x="607.8" y="118.90" text-anchor="end">-108.2</text>
<text x="655.5" y="118.90" text-anchor="end">2Edge</text>
<text x="703.5" y="118.90" text-anchor="end">52.5</text>
<text x="744.5" y="118.90" text-anchor="end" fill="hsl(4,77%,42.0%)" stroke="hsl(4,77%,42.0%)">4°</text>
<text x="792" y="118.90" text-anchor="end" fill="hsl(4,77%,42.0%)" stroke="hsl(4,77%,42.0%)">(21°)</text>
<text x="325.7" y="130.90">WVII-DT</text>
<text x="413.1" y="130.90" text-anchor="end">7</text>
<text x="484.5" y="130.90" text-anchor="middle">ABC</text>
<text x="548.3" y="130.90" text-anchor="end">-17.8</text>
<text x="607.8" y="130.90" text-anchor="end">-108.6</text>
<text x="655.5" y="130.90" text-anchor="end">2Edge</text>
<text x="703.5" y="130.90" text-anchor="end">129.5</text>
<text x="744.5" y="130.90" text-anchor="end" fill="hsl(184,77%,34.2%)" stroke="hsl(184,77%,34.2%)">184°</text>
<text x="792" y="130.90" text-anchor="end" fill="hsl(184,77%,34.2%)" stroke="hsl(184,77%,34.2%)">(201°)</text>
<text x="325.7" y="141.90">CFTF-DT</text>
<text x="413.1" y="141.90" text-anchor="end">29</text>
<text x="460.5" y="141.90" text-anchor="end">(29.1)</text>
<text x="484.5" y="141.90" text-anchor="middle">V</text>
<text x="548.3" y="141.90" text-anchor="end">-22.6</text>
<text x="607.8" y="141.90" text-anchor="end">-113.5</text>
<text x="655.5" y="141.90" text-anchor="end">1Edge</text>
<text x="703.5" y="141.90" text-anchor="end">80.2</text>
<text x="744.5" y="141.90" text-anchor="end" fill="hsl(325,77%,42.0%)" stroke="hsl(325,77%,42.0%)">325°</text>
<text x="792" y="141.90" text-anchor="end" fill="hsl(325,77%,42.0%)" stroke="hsl(325,77%,42.0%)">(342°)</text>
<text x="325.7" y="152.90">WGCI-LD</text>
<text x="413.1" y="152.90" text-anchor="end">4</text>
<text x="548.3" y="152.90" text-anchor="end">-24.1</text>
<text x="607.8" y="152.90" text-anchor="end">-115.0</text>
<text x="655.5" y="152.90" text-anchor="end">2Edge</text>
<text x="703.5" y="152.90" text-anchor="end">147.3</text>
<text x="744.5" y="152.90" text-anchor="end" fill="hsl(206,77%,37.2%)" stroke="hsl(206,77%,37.2%)">206°</text>
<text x="792" y="152.90" text-anchor="end" fill="hsl(206,77%,37.2%)" stroke="hsl(206,77%,37.2%)">(224°)</text>
<text x="325.7" y="163.90">WABI-TV</text>
<text x="413.1" y="163.90" text-anchor="end">13</text>
<text x="460.5" y="163.90" text-anchor="end">(5.1)</text>
<text x="484.5" y="163.90" text-anchor="middle">CBS</text>
<text x="548.3" y="163.90" text-anchor="end">-24.9</text>
<text x="607.8" y="163.90" text-anchor="end">-115.7</text>
<text x="655.5" y="163.90" text-anchor="end">Tropo</text>
<text x="703.5" y="163.90" text-anchor="end">137.2</text>
<text x="744.5" y="163.90" text-anchor="end" fill="hsl(194,77%,35.4%)" stroke="hsl(194,77%,35.4%)">194°</text>
<text x="792" y="163.90" text-anchor="end" fill="hsl(194,77%,35.4%)" stroke="hsl(194,77%,35.4%)">(212°)</text>
<text x="325.7" y="174.90">CIVB-DT*</text>
<text x="413.1" y="174.90" text-anchor="end">31</text>
<text x="460.5" y="174.90" text-anchor="end">(31.1)</text>
<text x="548.3" y="174.90" text-anchor="end">-28.1</text>
<text x="607.8" y="174.90" text-anchor="end">-119.0</text>
<text x="655.5" y="174.90" text-anchor="end">2Edge</text>
<text x="703.5" y="174.90" text-anchor="end">114.6</text>
<text x="744.5" y="174.90" text-anchor="end" fill="hsl(314,77%,42.0%)" stroke="hsl(314,77%,42.0%)">314°</text>
<text x="792" y="174.90" text-anchor="end" fill="hsl(314,77%,42.0%)" stroke="hsl(314,77%,42.0%)">(332°)</text>
<text x="325.7" y="185.90">WMEB-DT</text>
<text x="413.1" y="185.90" text-anchor="end">9</text>
<text x="460.5" y="185.90" text-anchor="end">(12.1)</text>
<text x="484.5" y="185.90" text-anchor="middle">PBS</text>
<text x="548.3" y="185.90" text-anchor="end">-28.3</text>
<text x="607.8" y="185.90" text-anchor="end">-119.2</text>
<text x="655.5" y="185.90" text-anchor="end">Tropo</text>
<text x="703.5" y="185.90" text-anchor="end">137.2</text>
<text x="744.5" y="185.90" text-anchor="end" fill="hsl(194,77%,35.4%)" stroke="hsl(194,77%,35.4%)">194°</text>
<text x="792" y="185.90" text-anchor="end" fill="hsl(194,77%,35.4%)" stroke="hsl(194,77%,35.4%)">(212°)</text>
<text x="325.7" y="197.90">WMED-DT</text>
<text x="413.1" y="197.90" text-anchor="end">10</text>
<text x="460.5" y="197.90" text-anchor="end">(13.1)</text>
<text x="484.5" y="197.90" text-anchor="middle">PBS</text>
<text x="548.3" y="197.90" text-anchor="end">-29.7</text>
<text x="607.8" y="197.90" text-anchor="end">-120.6</text>
<text x="655.5" y="197.90" text-anchor="end">Tropo</text>
<text x="703.5" y="197.90" text-anchor="end">122.1</text>
<text x="744.5" y="197.90" text-anchor="end" fill="hsl(155,77%,32.2%)" stroke="hsl(155,77%,32.2%)">155°</text>
<text x="792" y="197.90" text-anchor="end" fill="hsl(155,77%,32.2%)" stroke="hsl(155,77%,32.2%)">(172°)</text>
<text x="325.7" y="208.90">CKLT-DT</text>
<text x="413.1" y="208.90" text-anchor="end">9</text>
<text x="460.5" y="208.90" text-anchor="end">(9.1)</text>
<text x="548.3" y="208.90" text-anchor="end">-30.5</text>
<text x="607.8" y="208.90" text-anchor="end">-121.3</text>
<text x="655.5" y="208.90" text-anchor="end">2Edge</text>
<text x="703.5" y="208.90" text-anchor="end">131.0</text>
<text x="744.5" y="208.90" text-anchor="end" fill="hsl(127,77%,32.5%)" stroke="hsl(127,77%,32.5%)">127°</text>
<text x="792" y="208.90" text-anchor="end" fill="hsl(127,77%,32.5%)" stroke="hsl(127,77%,32.5%)">(144°)</text>
<text x="325.7" y="219.90">CIVQ-DT*</text>
<text x="413.1" y="219.90" text-anchor="end">15</text>
<text x="460.5" y="219.90" text-anchor="end">(15.1)</text>
<text x="548.3" y="219.90" text-anchor="end">-33.4</text>
<text x="607.8" y="219.90" text-anchor="end">-124.3</text>
<text x="655.5" y="219.90" text-anchor="end">Tropo</text>
<text x="703.5" y="219.90" text-anchor="end">134.6</text>
<text x="744.5" y="219.90" text-anchor="end" fill="hsl(276,77%,42.0%)" stroke="hsl(276,77%,42.0%)">276°</text>
<text x="792" y="219.90" text-anchor="end" fill="hsl(276,77%,42.0%)" stroke="hsl(276,77%,42.0%)">(294°)</text>
<text x="325.7" y="230.90">W11AY</text>
<text x="413.1" y="230.90" text-anchor="end">11</text>
<text x="460.5" y="230.90" text-anchor="end">(11.1)</text>
<text x="548.3" y="230.90" text-anchor="end">-35.6</text>
<text x="607.8" y="230.90" text-anchor="end">-126.4</text>
<text x="655.5" y="230.90" text-anchor="end">2Edge</text>
<text x="703.5" y="230.90" text-anchor="end">43.6</text>
<text x="744.5" y="230.90" text-anchor="end" fill="hsl(341,77%,42.0%)" stroke="hsl(341,77%,42.0%)">341°</text>
<text x="792" y="230.90" text-anchor="end" fill="hsl(341,77%,42.0%)" stroke="hsl(341,77%,42.0%)">(358°)</text>
<text x="325.7" y="241.90">CFCM-DT*</text>
<text x="413.1" y="241.90" text-anchor="end">17</text>
<text x="460.5" y="241.90" text-anchor="end">(17.1)</text>
<text x="548.3" y="241.90" text-anchor="end">-38.1</text>
<text x="607.8" y="241.90" text-anchor="end">-128.9</text>
<text x="655.5" y="241.90" text-anchor="end">Tropo</text>
<text x="703.5" y="241.90" text-anchor="end">136.7</text>
<text x="744.5" y="241.90" text-anchor="end" fill="hsl(275,77%,42.0%)" stroke="hsl(275,77%,42.0%)">275°</text>
<text x="792" y="241.90" text-anchor="end" fill="hsl(275,77%,42.0%)" stroke="hsl(275,77%,42.0%)">(293°)</text>
<text x="325.7" y="252.90">WMEB-TV</text>
<text x="413.1" y="252.90" text-anchor="end">25</text>
<text x="484.5" y="252.90" text-anchor="middle">PBS</text>
<text x="548.3" y="252.90" text-anchor="end">-38.3</text>
<text x="607.8" y="252.90" text-anchor="end">-129.2</text>
<text x="655.5" y="252.90" text-anchor="end">Tropo</text>
<text x="703.5" y="252.90" text-anchor="end">129.3</text>
<text x="744.5" y="252.90" text-anchor="end" fill="hsl(184,77%,34.2%)" stroke="hsl(184,77%,34.2%)">184°</text>
<text x="792" y="252.90" text-anchor="end" fill="hsl(184,77%,34.2%)" stroke="hsl(184,77%,34.2%)">(201°)</text>
<text x="325.7" y="264.90">W36CK</text>
<text x="413.1" y="264.90" text-anchor="end">36</text>
<text x="460.5" y="264.90" text-anchor="end">(36.1)</text>
<text x="548.3" y="264.90" text-anchor="end">-39.2</text>
<text x="607.8" y="264.90" text-anchor="end">-130.1</text>
<text x="655.5" y="264.90" text-anchor="end">Tropo</text>
<text x="703.5" y="264.90" text-anchor="end">136.0</text>
<text x="744.5" y="264.90" text-anchor="end" fill="hsl(187,77%,34.6%)" stroke="hsl(187,77%,34.6%)">187°</text>
<text x="792" y="264.90" text-anchor="end" fill="hsl(187,77%,34.6%)" stroke="hsl(187,77%,34.6%)">(205°)</text>
<text x="325.7" y="275.90">CBVT-DT</text>
<text x="413.1" y="275.90" text-anchor="end">12</text>
<text x="460.5" y="275.90" text-anchor="end">(12.1)</text>
<text x="484.5" y="275.90" text-anchor="middle">SRC</text>
<text x="548.3" y="275.90" text-anchor="end">-39.4</text>
<text x="607.8" y="275.90" text-anchor="end">-130.3</text>
<text x="655.5" y="275.90" text-anchor="end">Tropo</text>
<text x="703.5" y="275.90" text-anchor="end">147.8</text>
<text x="744.5" y="275.90" text-anchor="end" fill="hsl(276,77%,42.0%)" stroke="hsl(276,77%,42.0%)">276°</text>
<text x="792" y="275.90" text-anchor="end" fill="hsl(276,77%,42.0%)" stroke="hsl(276,77%,42.0%)">(294°)</text>
<text x="325.7" y="286.90">CBVT-DT*</text>
<text x="413.1" y="286.90" text-anchor="end">12</text>
<text x="460.5" y="286.90" text-anchor="end">(12.1)</text>
<text x="548.3" y="286.90" text-anchor="end">-39.4</text>
<text x="607.8" y="286.90" text-anchor="end">-130.3</text>
<text x="655.5" y="286.90" text-anchor="end">Tropo</text>
<text x="703.5" y="286.90" text-anchor="end">147.8</text>
<text x="744.5" y="286.90" text-anchor="end" fill="hsl(276,77%,42.0%)" stroke="hsl(276,77%,42.0%)">276°</text>
<text x="792" y="286.90" text-anchor="end" fill="hsl(276,77%,42.0%)" stroke="hsl(276,77%,42.0%)">(294°)</text>
<text x="325.7" y="297.90">CIHF-DT*</text>
<text x="413.1" y="297.90" text-anchor="end">12</text>
<text x="460.5" y="297.90" text-anchor="end">(12.1)</text>
<text x="548.3" y="297.90" text-anchor="end">-39.7</text>
<text x="607.8" y="297.90" text-anchor="end">-130.6</text>
<text x="655.5" y="297.90" text-anchor="end">2Edge</text>
<text x="703.5" y="297.90" text-anchor="end">131.0</text>
<text x="744.5" y="297.90" text-anchor="end" fill="hsl(127,77%,32.5%)" stroke="hsl(127,77%,32.5%)">127°</text>
<text x="792" y="297.90" text-anchor="end" fill="hsl(127,77%,32.5%)" stroke="hsl(127,77%,32.5%)">(144°)</text>
</g>
<rect x="346.6" y="304.7" width="7" height="11.3" fill="#c80000"/>
<text x="350.1" y="314" font-family="Liberation Mono" font-size="11.08" fill="#fff" text-anchor="middle">C</text>
<text x="360.6" y="315" font-family="Liberation Sans" font-size="12.7" fill="#111" textLength="123.4" lengthAdjust="spacingAndGlyphs">= Co-channel warning</text>
<rect x="557.4" y="304.7" width="7.6" height="11.3" fill="#f07878"/>
<text x="561.2" y="314" font-family="Liberation Mono" font-size="11.08" fill="#fff" text-anchor="middle">a</text>
<text x="572.4" y="315" font-family="Liberation Sans" font-size="12.7" fill="#111" textLength="155.9" lengthAdjust="spacingAndGlyphs">= Adjacent channel warning</text>
<rect x="39.2" y="636.5" width="9.6" height="123" fill="#e8e8e8"/>
<rect x="70.1" y="634" width="30.5" height="126" fill="#e8e8e8"/>
<line x1="9" y1="645.5" x2="172.5" y2="645.5" stroke="#666" stroke-width="1" stroke-dasharray="1,1"/>
<line x1="216" y1="645.5" x2="792" y2="645.5" stroke="#666" stroke-width="1" stroke-dasharray="1,1"/>
<text x="201.6" y="649.1" font-family="Liberation Sans" font-size="10.7" text-anchor="end" fill="#111">-10</text>
<line x1="9" y1="657.5" x2="172.5" y2="657.5" stroke="#666" stroke-width="1" stroke-dasharray="1,1"/>
<line x1="216" y1="657.5" x2="792" y2="657.5" stroke="#666" stroke-width="1" stroke-dasharray="1,1"/>
<text x="201.6" y="661.1" font-family="Liberation Sans" font-size="10.7" text-anchor="end" fill="#111">-20</text>
<line x1="9" y1="670.5" x2="172.5" y2="670.5" stroke="#666" stroke-width="1" stroke-dasharray="1,1"/>
<line x1="216" y1="670.5" x2="792" y2="670.5" stroke="#666" stroke-width="1" stroke-dasharray="1,1"/>
<text x="201.6" y="674.1" font-family="Liberation Sans" font-size="10.7" text-anchor="end" fill="#111">-30</text>
<line x1="9" y1="683.5" x2="172.5" y2="683.5" stroke="#666" stroke-width="1" stroke-dasharray="1,1"/>
<line x1="216" y1="683.5" x2="792" y2="683.5" stroke="#666" stroke-width="1" stroke-dasharray="1,1"/>
<text x="201.6" y="687.1" font-family="Liberation Sans" font-size="10.7" text-anchor="end" fill="#111">-40</text>
<line x1="9" y1="696.5" x2="172.5" y2="696.5" stroke="#666" stroke-width="1" stroke-dasharray="1,1"/>
<line x1="216" y1="696.5" x2="792" y2="696.5" stroke="#666" stroke-width="1" stroke-dasharray="1,1"/>
<text x="201.6" y="700.1" font-family="Liberation Sans" font-size="10.7" text-anchor="end" fill="#111">-50</text>
<line x1="9" y1="708.5" x2="172.5" y2="708.5" stroke="#666" stroke-width="1" stroke-dasharray="1,1"/>
<line x1="216" y1="708.5" x2="792" y2="708.5" stroke="#666" stroke-width="1" stroke-dasharray="1,1"/>
<text x="201.6" y="712.1" font-family="Liberation Sans" font-size="10.7" text-anchor="end" fill="#111">-60</text>
<line x1="9" y1="721.5" x2="172.5" y2="721.5" stroke="#666" stroke-width="1" stroke-dasharray="1,1"/>
<line x1="216" y1="721.5" x2="792" y2="721.5" stroke="#666" stroke-width="1" stroke-dasharray="1,1"/>
<text x="201.6" y="725.1" font-family="Liberation Sans" font-size="10.7" text-anchor="end" fill="#111">-70</text>
<line x1="9" y1="734.5" x2="172.5" y2="734.5" stroke="#666" stroke-width="1" stroke-dasharray="1,1"/>
<line x1="216" y1="734.5" x2="792" y2="734.5" stroke="#666" stroke-width="1" stroke-dasharray="1,1"/>
<text x="201.6" y="738.1" font-family="Liberation Sans" font-size="10.7" text-anchor="end" fill="#111">-80</text>
<line x1="9" y1="746.5" x2="172.5" y2="746.5" stroke="#666" stroke-width="1" stroke-dasharray="1,1"/>
<line x1="216" y1="746.5" x2="792" y2="746.5" stroke="#666" stroke-width="1" stroke-dasharray="1,1"/>
<text x="201.6" y="750.1" font-family="Liberation Sans" font-size="10.7" text-anchor="end" fill="#111">-90</text>
<text x="205.3" y="635.6" font-family="Liberation Sans" font-size="11.2" text-anchor="end" fill="#111">dBm</text>
<path d="M12.5,632.5 H7.5 V760" fill="none" stroke="#000" stroke-width="2"/>
<path d="M65,632.5 H111" fill="none" stroke="#000" stroke-width="2"/>
<path d="M163,632.5 H173.4 V760" fill="none" stroke="#000" stroke-width="2"/>
<path d="M214.6,760 V632.5 H482.3 M524.1,632.5 H792.7 V760" fill="none" stroke="#000" stroke-width="2"/>
<line x1="7.5" y1="760" x2="173.4" y2="760" stroke="#000" stroke-width="2"/>
<line x1="214.6" y1="760" x2="792.7" y2="760" stroke="#000" stroke-width="2"/>
<text x="39.3" y="635.6" font-family="Liberation Sans" font-weight="bold" font-size="10" text-anchor="middle" fill="#000" textLength="37.5" lengthAdjust="spacing">VHF Lo</text>
<text x="137.4" y="635.6" font-family="Liberation Sans" font-weight="bold" font-size="10" text-anchor="middle" fill="#000" textLength="36.6" lengthAdjust="spacing">VHF Hi</text>
<text x="503.3" y="635.6" font-family="Liberation Sans" font-weight="bold" font-size="10.5" text-anchor="middle" fill="#000" textLength="22" lengthAdjust="spacing">UHF</text>
<text x="177.3" y="762" font-family="Liberation Sans" font-size="9.6" fill="#222" textLength="33.6" lengthAdjust="spacingAndGlyphs">Channel</text>
<rect x="31.65" y="756" width="5.5" height="8" fill="#fff"/>
<text x="34.4" y="761.9" font-family="Liberation Sans" font-size="8.3" text-anchor="middle" fill="#222">4</text>
<rect x="52.25" y="756" width="5.5" height="8" fill="#fff"/>
<text x="55" y="761.9" font-family="Liberation Sans" font-size="8.3" text-anchor="middle" fill="#222">5</text>
<rect x="61.849999999999994" y="756" width="5.5" height="8" fill="#fff"/>
<text x="64.6" y="761.9" font-family="Liberation Sans" font-size="8.3" text-anchor="middle" fill="#222">6</text>
<rect x="103.15" y="756" width="5.5" height="8" fill="#fff"/>
<text x="105.9" y="761.9" font-family="Liberation Sans" font-size="8.3" text-anchor="middle" fill="#222">7</text>
<rect x="123.85" y="756" width="5.5" height="8" fill="#fff"/>
<text x="126.6" y="761.9" font-family="Liberation Sans" font-size="8.3" text-anchor="middle" fill="#222">9</text>
<rect x="142.2" y="756" width="10.0" height="8" fill="#fff"/>
<text x="147.2" y="761.9" font-family="Liberation Sans" font-size="8.3" text-anchor="middle" fill="#222">11</text>
<rect x="163.0" y="756" width="10.0" height="8" fill="#fff"/>
<text x="168" y="761.9" font-family="Liberation Sans" font-size="8.3" text-anchor="middle" fill="#222">13</text>
<rect x="215.01" y="756" width="9.5" height="8" fill="#fff"/>
<text x="219.76" y="761.7" font-family="Liberation Sans" font-size="7.8" text-anchor="middle" fill="#222">14</text>
<rect x="235.65" y="756" width="9.5" height="8" fill="#fff"/>
<text x="240.4" y="761.7" font-family="Liberation Sans" font-size="7.8" text-anchor="middle" fill="#222">16</text>
<rect x="266.61" y="756" width="9.5" height="8" fill="#fff"/>
<text x="271.36" y="761.7" font-family="Liberation Sans" font-size="7.8" text-anchor="middle" fill="#222">19</text>
<rect x="297.57" y="756" width="9.5" height="8" fill="#fff"/>
<text x="302.32" y="761.7" font-family="Liberation Sans" font-size="7.8" text-anchor="middle" fill="#222">22</text>
<rect x="328.53" y="756" width="9.5" height="8" fill="#fff"/>
<text x="333.28" y="761.7" font-family="Liberation Sans" font-size="7.8" text-anchor="middle" fill="#222">25</text>
<rect x="359.49" y="756" width="9.5" height="8" fill="#fff"/>
<text x="364.24" y="761.7" font-family="Liberation Sans" font-size="7.8" text-anchor="middle" fill="#222">28</text>
<rect x="390.45" y="756" width="9.5" height="8" fill="#fff"/>
<text x="395.2" y="761.7" font-family="Liberation Sans" font-size="7.8" text-anchor="middle" fill="#222">31</text>
<rect x="421.40999999999997" y="756" width="9.5" height="8" fill="#fff"/>
<text x="426.15999999999997" y="761.7" font-family="Liberation Sans" font-size="7.8" text-anchor="middle" fill="#222">34</text>
<rect x="452.37" y="756" width="9.5" height="8" fill="#fff"/>
<text x="457.12" y="761.7" font-family="Liberation Sans" font-size="7.8" text-anchor="middle" fill="#222">37</text>
<rect x="483.33000000000004" y="756" width="9.5" height="8" fill="#fff"/>
<text x="488.08000000000004" y="761.7" font-family="Liberation Sans" font-size="7.8" text-anchor="middle" fill="#222">40</text>
<rect x="514.29" y="756" width="9.5" height="8" fill="#fff"/>
<text x="519.04" y="761.7" font-family="Liberation Sans" font-size="7.8" text-anchor="middle" fill="#222">43</text>
<rect x="545.25" y="756" width="9.5" height="8" fill="#fff"/>
<text x="550.0" y="761.7" font-family="Liberation Sans" font-size="7.8" text-anchor="middle" fill="#222">46</text>
<rect x="576.21" y="756" width="9.5" height="8" fill="#fff"/>
<text x="580.96" y="761.7" font-family="Liberation Sans" font-size="7.8" text-anchor="middle" fill="#222">49</text>
<rect x="607.17" y="756" width="9.5" height="8" fill="#fff"/>
<text x="611.92" y="761.7" font-family="Liberation Sans" font-size="7.8" text-anchor="middle" fill="#222">52</text>
<rect x="638.13" y="756" width="9.5" height="8" fill="#fff"/>
<text x="642.88" y="761.7" font-family="Liberation Sans" font-size="7.8" text-anchor="middle" fill="#222">55</text>
<rect x="669.09" y="756" width="9.5" height="8" fill="#fff"/>
<text x="673.84" y="761.7" font-family="Liberation Sans" font-size="7.8" text-anchor="middle" fill="#222">58</text>
<rect x="700.05" y="756" width="9.5" height="8" fill="#fff"/>
<text x="704.8" y="761.7" font-family="Liberation Sans" font-size="7.8" text-anchor="middle" fill="#222">61</text>
<rect x="731.01" y="756" width="9.5" height="8" fill="#fff"/>
<text x="735.76" y="761.7" font-family="Liberation Sans" font-size="7.8" text-anchor="middle" fill="#222">64</text>
<rect x="761.97" y="756" width="9.5" height="8" fill="#fff"/>
<text x="766.72" y="761.7" font-family="Liberation Sans" font-size="7.8" text-anchor="middle" fill="#222">67</text>
<rect x="782.61" y="756" width="9.5" height="8" fill="#fff"/>
<text x="787.36" y="761.7" font-family="Liberation Sans" font-size="7.8" text-anchor="middle" fill="#222">69</text>
<rect x="7.3" y="736.9839" width="12.4" height="6.0" rx="3.0" fill="#f4f4a0"/>
<rect x="8.9" y="738.3838999999999" width="9.2" height="3.2" fill="#78a8e8"/>
<rect x="7.3" y="756.4608" width="12.4" height="6.0" rx="3.0" fill="#f4f4a0"/>
<rect x="8.9" y="757.8607999999999" width="9.2" height="3.2" fill="#78a8e8"/>
<rect x="48.8" y="740.1664" width="12.4" height="6.0" rx="3.0" fill="#f4f4a0"/>
<rect x="50.4" y="741.5663999999999" width="9.2" height="3.2" fill="#78a8e8"/>
<rect x="100.0" y="740.9302" width="12.4" height="6.0" rx="3.0" fill="#f4f4a0"/>
<rect x="101.60000000000001" y="742.3302" width="9.2" height="3.2" fill="#78a8e8"/>
<rect x="109.89999999999999" y="725.6542" width="12.4" height="6.0" rx="3.0" fill="#ffff00"/>
<rect x="111.5" y="727.0541999999999" width="9.2" height="3.2" fill="#0a55d0"/>
<rect x="120.3" y="738.7660999999999" width="12.4" height="6.0" rx="3.0" fill="#f4f4a0"/>
<rect x="121.9" y="740.1660999999999" width="9.2" height="3.2" fill="#78a8e8"/>
<rect x="131.0" y="723.872" width="12.4" height="6.0" rx="3.0" fill="#ffff00"/>
<rect x="132.6" y="725.2719999999999" width="9.2" height="3.2" fill="#0a55d0"/>
<text transform="translate(15.2,735.6) rotate(-90)" font-family="Liberation Sans" font-size="9.8" fill="#78a8e8">W02AU</text>
<text transform="translate(15.2,753.8) rotate(-90)" font-family="Liberation Sans" font-size="9.8" fill="#78a8e8">WLBZ</text>
<text transform="translate(57.1,738.3) rotate(-90)" font-family="Liberation Sans" font-size="9.8" fill="#78a8e8">W04AY</text>
<text transform="translate(108.3,738.2) rotate(-90)" font-family="Liberation Sans" font-size="9.8" fill="#78a8e8">CKRT-DT</text>
<text transform="translate(119.2,723.6) rotate(-90)" font-family="Liberation Sans" font-size="9.8" fill="#0a55d0">WAGM-TV</text>
<text transform="translate(129.6,735.1) rotate(-90)" font-family="Liberation Sans" font-size="9.8" fill="#78a8e8">CIMT-DT(1)</text>
<text transform="translate(139.6,721.5) rotate(-90)" font-family="Liberation Sans" font-size="9.8" fill="#0a55d0">WMEM-DT</text>
</svg>
</body></html>
